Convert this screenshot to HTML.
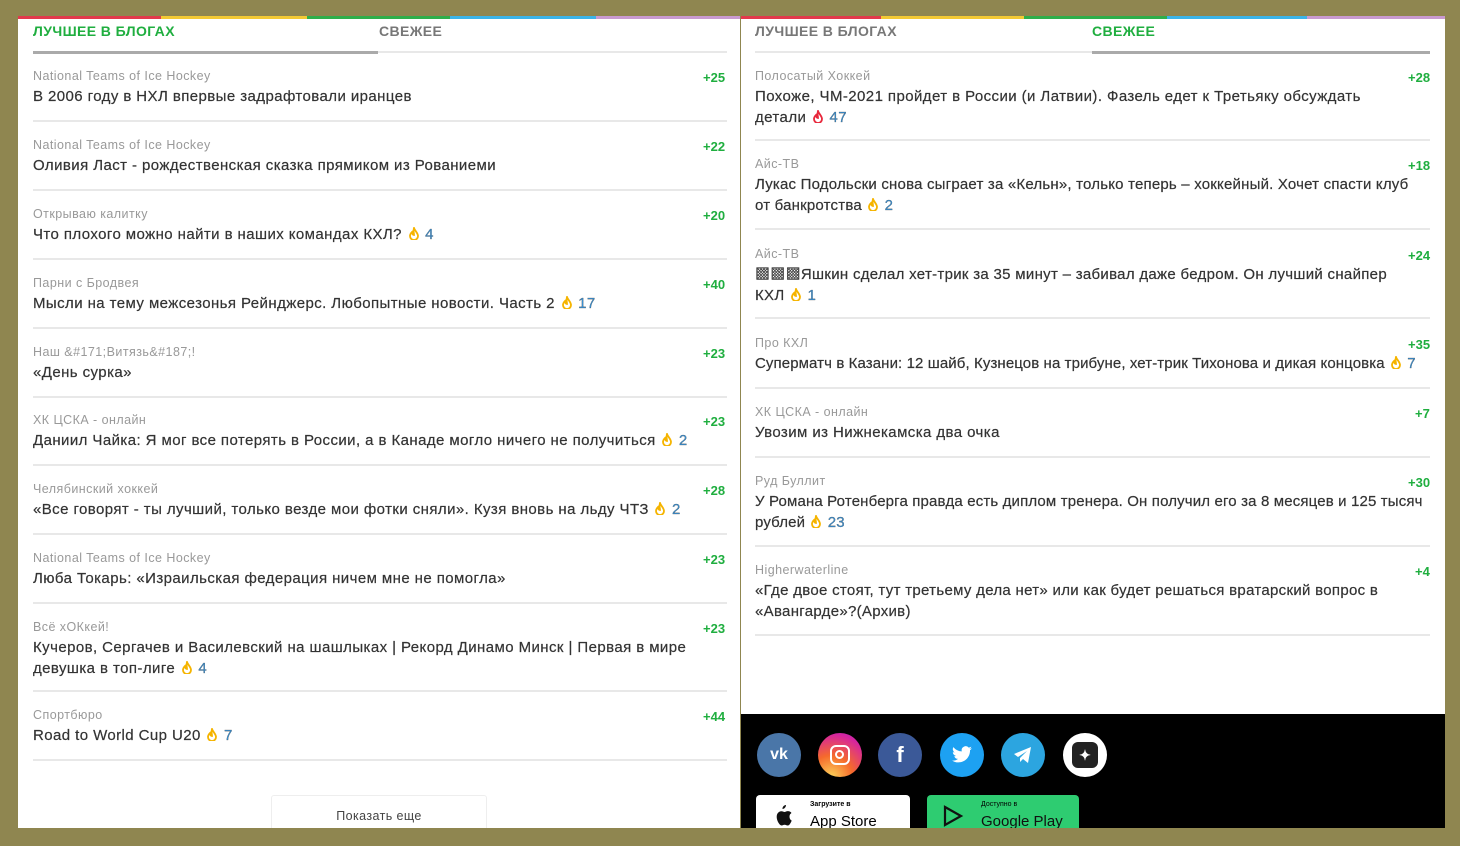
<!DOCTYPE html>
<html><head><meta charset="utf-8"><style>
*{margin:0;padding:0;box-sizing:border-box}
body{width:1460px;height:846px;background:#8f8650;position:relative;overflow:hidden;font-family:"Liberation Sans","Noto Sans CJK SC",sans-serif}
.panel{position:absolute;background:#fff;top:16px;height:812px}
.stripe{position:absolute;top:16px;height:3px}
.tab{position:absolute;top:23px;font-size:14px;font-weight:bold;letter-spacing:0.4px}
.src{position:absolute;font-size:12.5px;color:#999;letter-spacing:0.45px}
.ttl{position:absolute;font-size:15px;color:#333;line-height:20.5px;letter-spacing:0.42px;-webkit-text-stroke:0.2px #333}
.sc{position:absolute;font-size:13px;color:#1fae3f;font-weight:bold}
.dv{position:absolute;height:2px;background:#e8e8e8}
.n{color:#3a8fd0}
.fl{display:inline-block;width:10px;height:13px;vertical-align:-1px;margin:0 2px}
.ic{position:absolute;top:733px;width:44px;height:44px;border-radius:50%;display:flex;align-items:center;justify-content:center;color:#fff;font-weight:bold}
</style></head><body>
<svg width="0" height="0" style="position:absolute"><defs><symbol id="fl" viewBox="0 0 10 13"><path d="M5 1C6 4 9 6 9 9a4 4 0 0 1-8 0c0-2 1-3 2-4 0 2 1 3 2 3C5 6 4 4 5 1z" fill="none" stroke="currentColor" stroke-width="1.8"/></symbol></defs></svg>
<div class="panel" style="left:18px;width:722px"></div>
<div class="panel" style="left:741px;width:704px"></div>
<div class="stripe" style="left:18px;width:143px;background:#e23a4c"></div>
<div class="stripe" style="left:161px;width:146px;background:#f3c934"></div>
<div class="stripe" style="left:307px;width:143px;background:#2fae4a"></div>
<div class="stripe" style="left:450px;width:146px;background:#3bb4e8"></div>
<div class="stripe" style="left:596px;width:144px;background:#c99ad0"></div>
<div class="stripe" style="left:741px;width:140px;background:#e23a4c"></div>
<div class="stripe" style="left:881px;width:143px;background:#f3c934"></div>
<div class="stripe" style="left:1024px;width:143px;background:#2fae4a"></div>
<div class="stripe" style="left:1167px;width:140px;background:#3bb4e8"></div>
<div class="stripe" style="left:1307px;width:138px;background:#c99ad0"></div>

<div class="tab" style="left:33px;color:#1fae3f">ЛУЧШЕЕ В БЛОГАХ</div>
<div class="tab" style="left:379px;color:#777">СВЕЖЕЕ</div>
<div class="dv" style="left:33px;top:51px;width:345px;height:3px;background:#aaa"></div>
<div class="dv" style="left:378px;top:51px;width:349px"></div>

<div class="tab" style="left:755px;color:#777">ЛУЧШЕЕ В БЛОГАХ</div>
<div class="tab" style="left:1092px;color:#1fae3f">СВЕЖЕЕ</div>
<div class="dv" style="left:755px;top:51px;width:337px"></div>
<div class="dv" style="left:1092px;top:51px;width:338px;height:3px;background:#aaa"></div>

<div class="src" style="left:33px;top:69px">National Teams of Ice Hockey</div><div class="sc" style="left:703px;top:70px">+25</div>
<div class="ttl" style="left:33px;top:87px">В 2006 году в НХЛ впервые задрафтовали иранцев</div>
<div class="dv" style="left:33px;top:120px;width:694px"></div>

<div class="src" style="left:33px;top:138px">National Teams of Ice Hockey</div><div class="sc" style="left:703px;top:139px">+22</div>
<div class="ttl" style="left:33px;top:156px">Оливия Ласт - рождественская сказка прямиком из Рованиеми</div>
<div class="dv" style="left:33px;top:189px;width:694px"></div>

<div class="src" style="left:33px;top:207px">Открываю калитку</div><div class="sc" style="left:703px;top:208px">+20</div>
<div class="ttl" style="left:33px;top:225px">Что плохого можно найти в наших командах КХЛ? <svg class="fl" style="color:#f5b400"><use href="#fl"/></svg> <span class="n">4</span></div>
<div class="dv" style="left:33px;top:258px;width:694px"></div>

<div class="src" style="left:33px;top:276px">Парни с Бродвея</div><div class="sc" style="left:703px;top:277px">+40</div>
<div class="ttl" style="left:33px;top:294px">Мысли на тему межсезонья Рейнджерс. Любопытные новости. Часть 2 <svg class="fl" style="color:#f5b400"><use href="#fl"/></svg> <span class="n">17</span></div>
<div class="dv" style="left:33px;top:327px;width:694px"></div>

<div class="src" style="left:33px;top:345px">Наш &amp;#171;Витязь&amp;#187;!</div><div class="sc" style="left:703px;top:346px">+23</div>
<div class="ttl" style="left:33px;top:363px">«День сурка»</div>
<div class="dv" style="left:33px;top:396px;width:694px"></div>

<div class="src" style="left:33px;top:413px">ХК ЦСКА - онлайн</div><div class="sc" style="left:703px;top:414px">+23</div>
<div class="ttl" style="left:33px;top:431px;white-space:nowrap">Даниил Чайка: Я мог все потерять в России, а в Канаде могло ничего не получиться <svg class="fl" style="color:#f5b400"><use href="#fl"/></svg> <span class="n">2</span></div>
<div class="dv" style="left:33px;top:464px;width:694px"></div>

<div class="src" style="left:33px;top:482px">Челябинский хоккей</div><div class="sc" style="left:703px;top:483px">+28</div>
<div class="ttl" style="left:33px;top:500px;white-space:nowrap">«Все говорят - ты лучший, только везде мои фотки сняли». Кузя вновь на льду ЧТЗ <svg class="fl" style="color:#f5b400"><use href="#fl"/></svg> <span class="n">2</span></div>
<div class="dv" style="left:33px;top:533px;width:694px"></div>

<div class="src" style="left:33px;top:551px">National Teams of Ice Hockey</div><div class="sc" style="left:703px;top:552px">+23</div>
<div class="ttl" style="left:33px;top:569px">Люба Токарь: «Израильская федерация ничем мне не помогла»</div>
<div class="dv" style="left:33px;top:602px;width:694px"></div>

<div class="src" style="left:33px;top:620px">Всё хОКкей!</div><div class="sc" style="left:703px;top:621px">+23</div>
<div class="ttl" style="left:33px;top:638px;width:670px">Кучеров, Сергачев и Василевский на шашлыках | Рекорд Динамо Минск | Первая в мире девушка в топ-лиге <svg class="fl" style="color:#f5b400"><use href="#fl"/></svg> <span class="n">4</span></div>
<div class="dv" style="left:33px;top:690px;width:694px"></div>

<div class="src" style="left:33px;top:708px">Спортбюро</div><div class="sc" style="left:703px;top:709px">+44</div>
<div class="ttl" style="left:33px;top:726px">Road to World Cup U20 <svg class="fl" style="color:#f5b400"><use href="#fl"/></svg> <span class="n">7</span></div>
<div class="dv" style="left:33px;top:759px;width:694px"></div>

<div style="position:absolute;left:271px;top:795px;width:216px;height:40px;border:1px solid #eee;border-radius:3px;font-size:12.5px;color:#444;text-align:center;padding-top:13px;letter-spacing:0.4px">Показать еще</div>

<div class="src" style="left:755px;top:69px">Полосатый Хоккей</div><div class="sc" style="left:1408px;top:70px">+28</div>
<div class="ttl" style="left:755px;top:87px;width:620px">Похоже, ЧМ-2021 пройдет в России (и Латвии). Фазель едет к Третьяку обсуждать детали <svg class="fl" style="color:#e8283c"><use href="#fl"/></svg> <span class="n">47</span></div>
<div class="dv" style="left:755px;top:139px;width:675px"></div>

<div class="src" style="left:755px;top:157px">Айс-ТВ</div><div class="sc" style="left:1408px;top:158px">+18</div>
<div class="ttl" style="left:755px;top:175px;width:668px;letter-spacing:0.2px">Лукас Подольски снова сыграет за «Кельн», только теперь – хоккейный. Хочет спасти клуб от банкротства <svg class="fl" style="color:#f5b400"><use href="#fl"/></svg> <span class="n">2</span></div>
<div class="dv" style="left:755px;top:228px;width:675px"></div>

<div class="src" style="left:755px;top:247px">Айс-ТВ</div><div class="sc" style="left:1408px;top:248px">+24</div>
<div class="ttl" style="left:755px;top:265px;width:645px;letter-spacing:0.3px">▩▩▩Яшкин сделал хет-трик за 35 минут – забивал даже бедром. Он лучший снайпер КХЛ <svg class="fl" style="color:#f5b400"><use href="#fl"/></svg> <span class="n">1</span></div>
<div class="dv" style="left:755px;top:317px;width:675px"></div>

<div class="src" style="left:755px;top:336px">Про КХЛ</div><div class="sc" style="left:1408px;top:337px">+35</div>
<div class="ttl" style="left:755px;top:354px;white-space:nowrap;letter-spacing:0.1px">Суперматч в Казани: 12 шайб, Кузнецов на трибуне, хет-трик Тихонова и дикая концовка <svg class="fl" style="color:#f5b400"><use href="#fl"/></svg> <span class="n">7</span></div>
<div class="dv" style="left:755px;top:387px;width:675px"></div>

<div class="src" style="left:755px;top:405px">ХК ЦСКА - онлайн</div><div class="sc" style="left:1415px;top:406px">+7</div>
<div class="ttl" style="left:755px;top:423px">Увозим из Нижнекамска два очка</div>
<div class="dv" style="left:755px;top:456px;width:675px"></div>

<div class="src" style="left:755px;top:474px">Руд Буллит</div><div class="sc" style="left:1408px;top:475px">+30</div>
<div class="ttl" style="left:755px;top:492px;width:690px;letter-spacing:0.15px">У Романа Ротенберга правда есть диплом тренера. Он получил его за 8 месяцев и 125 тысяч рублей <svg class="fl" style="color:#f5b400"><use href="#fl"/></svg> <span class="n">23</span></div>
<div class="dv" style="left:755px;top:545px;width:675px"></div>

<div class="src" style="left:755px;top:563px">Higherwaterline</div><div class="sc" style="left:1415px;top:564px">+4</div>
<div class="ttl" style="left:755px;top:581px;width:645px;letter-spacing:0.3px">«Где двое стоят, тут третьему дела нет» или как будет решаться вратарский вопрос в «Авангарде»?(Архив)</div>
<div class="dv" style="left:755px;top:634px;width:675px"></div>

<div style="position:absolute;left:741px;top:714px;width:704px;height:114px;background:#000"></div>
<div class="ic" style="left:757px;background:#4a76a8;font-size:16px">vk</div>
<div class="ic" style="left:818px;background:radial-gradient(circle at 30% 100%,#fdd35a,#f56a2c 40%,#d6249f 80%,#a030c0)"><div style="width:20px;height:20px;border:2.5px solid #fff;border-radius:6px;position:relative"><div style="position:absolute;left:3px;top:3px;width:9px;height:9px;border:2px solid #fff;border-radius:50%"></div></div></div>
<div class="ic" style="left:878px;background:#3b5998;font-size:22px">f</div>
<div class="ic" style="left:940px;background:#1da1f2"><svg width="22" height="18" viewBox="0 0 24 20"><path d="M23 2.5c-.8.4-1.7.6-2.6.7a4.6 4.6 0 0 0 2-2.5c-.9.5-1.9.9-2.9 1.1A4.5 4.5 0 0 0 11.8 6 12.9 12.9 0 0 1 2.4 1.2a4.5 4.5 0 0 0 1.4 6 4.5 4.5 0 0 1-2-.6 4.5 4.5 0 0 0 3.6 4.5 4.5 4.5 0 0 1-2 .1 4.5 4.5 0 0 0 4.2 3.1A9.1 9.1 0 0 1 1 16.2 12.8 12.8 0 0 0 8 18.2c8.3 0 12.9-6.9 12.9-12.9v-.6c.9-.6 1.6-1.4 2.1-2.2z" fill="#fff"/></svg></div>
<div class="ic" style="left:1001px;background:#2ca5e0"><svg width="20" height="18" viewBox="0 0 20 18"><path d="M1 8l17-7-3 16-5-4-3 3v-4l7-7-9 6z" fill="#fff"/></svg></div>
<div class="ic" style="left:1063px;background:#fff"><div style="width:26px;height:26px;background:#222;border-radius:6px;color:#fff;font-size:14px;display:flex;align-items:center;justify-content:center">✦</div></div>
<div style="position:absolute;left:756px;top:795px;width:154px;height:40px;background:#fff;border-radius:4px"><svg style="position:absolute;left:17px;top:9px" width="20" height="24" viewBox="0 0 20 24"><path d="M13 1c0 2-1.5 4-3.5 4C9.3 3 11 1 13 1zM16.5 12.5c0-2.5 2-3.5 2-3.5-1-1.6-2.8-1.9-3.4-1.9-1.5-.2-2.9.9-3.6.9-.8 0-1.9-.9-3.1-.8C6.800 7.200 5.300 8.100 4.500 9.500c-1.700 2.900-.4 7.200 1.200 9.600.8 1.100 1.700 2.400 2.900 2.400 1.200-.1 1.600-.8 3-.8s1.800.8 3 .8c1.300 0 2.100-1.200 2.800-2.300.9-1.300 1.300-2.600 1.300-2.600s-2.200-.9-2.200-4.100z" fill="#111"/></svg><div style="position:absolute;left:54px;top:6px;font-size:7px;font-weight:bold">Загрузите в</div><div style="position:absolute;left:54px;top:18px;font-size:15px">App Store</div></div>
<div style="position:absolute;left:927px;top:795px;width:152px;height:40px;background:#2ecc71;border-radius:4px"><svg style="position:absolute;left:15px;top:10px" width="22" height="22" viewBox="0 0 22 22"><path d="M3 2l16 9-16 9z" fill="none" stroke="#111" stroke-width="2.2"/></svg><div style="position:absolute;left:54px;top:6px;font-size:7px">Доступно в</div><div style="position:absolute;left:54px;top:18px;font-size:15px;color:#111">Google Play</div></div>
<div style="position:absolute;left:0;top:828px;width:1460px;height:18px;background:#8f8650"></div>
</body></html>
